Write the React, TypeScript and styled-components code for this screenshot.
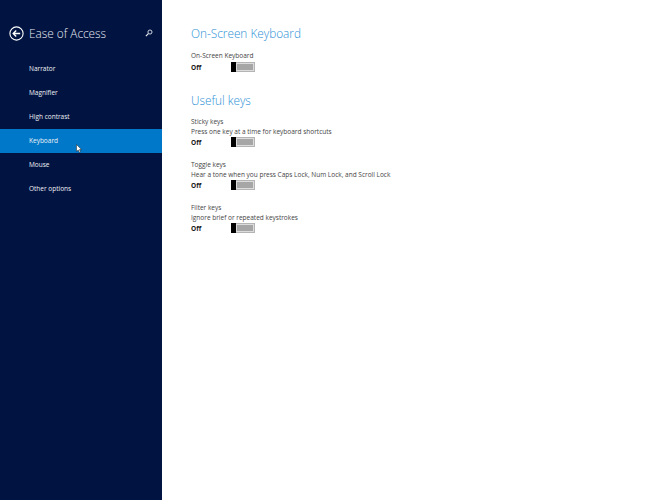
import React from 'react';
import styled, { createGlobalStyle } from 'styled-components';

const GlobalStyle = createGlobalStyle`
  html, body {
    margin: 0;
    padding: 0;
    height: 100%;
    background: #ffffff;
  }
  #root {
    height: 100%;
  }
`;

const Screen = styled.div`
  position: relative;
  display: flex;
  width: 667px;
  height: 500px;
  overflow: hidden;
  font-family: 'Open Sans', 'Noto Sans', sans-serif;
  background: #ffffff;
`;

const Sidebar = styled.nav`
  display: flex;
  flex-direction: column;
  flex: 0 0 162px;
  background: #011340;
  color: #ffffff;
`;

const SidebarHeader = styled.header`
  display: flex;
  align-items: center;
  height: 20px;
  margin-top: 23px;
  padding: 0 7px 0 9px;
  margin-bottom: 14px;
`;

const BackButton = styled.svg`
  flex: 0 0 15px;
  width: 15px;
  height: 15px;
  margin-right: 5px;
`;

const SidebarTitle = styled.h1`
  flex: 1;
  margin: 0;
  font-size: 11.8px;
  font-weight: 300;
  line-height: 20px;
  color: #e8ecf4;
`;

const SearchIcon = styled.svg`
  width: 8px;
  height: 8px;
  margin-right: 2px;
`;

const NavItem = styled.div<{ $active?: boolean }>`
  display: flex;
  align-items: center;
  box-sizing: border-box;
  height: 24px;
  padding: 0 0 1px 29px;
  font-size: 6.5px;
  color: #f0f2f6;
  background: ${props => (props.$active ? '#0078c9' : 'transparent')};
`;

const Content = styled.main`
  flex: 1;
  padding: 24px 0 0 29px;
`;

const SectionTitle = styled.h2`
  margin: 0;
  font-size: 11.8px;
  font-weight: 300;
  line-height: 18px;
  color: #2a8fd6;
`;

const SecondTitle = styled(SectionTitle)`
  margin-top: 18px;
`;

const SettingList = styled.div<{ $top: number }>`
  display: grid;
  row-gap: 10px;
  margin-top: ${props => props.$top}px;
`;

const Setting = styled.section`
  padding-top: 1px;
  font-size: 6.5px;
  line-height: 10px;
  color: #444444;
`;

const Description = styled.div``;

const ToggleRow = styled.div<{ $tight?: boolean }>`
  display: flex;
  align-items: center;
  height: 12px;
  margin: ${props => (props.$tight ? '-1px 0 1px' : '0')};
`;

const ToggleLabel = styled.span`
  flex: 0 0 40px;
  margin-top: 2px;
  font-weight: 700;
  color: #1a1a1a;
`;

const Track = styled.div`
  display: flex;
  box-sizing: border-box;
  width: 24px;
  height: 10px;
  border: 1px solid #b4b4b4;
  background: #dcdcdc;
`;

const Thumb = styled.div`
  flex: 0 0 5px;
  margin: -1px 0 -1px -1px;
  background: #000000;
`;

const TrackFill = styled.div`
  flex: 1;
  margin: 1px;
  background: #a6a6a6;
`;

const Cursor = styled.svg`
  position: absolute;
  left: 76px;
  top: 144px;
  width: 6px;
  height: 9px;
`;

const navItems = ['Narrator', 'Magnifier', 'High contrast', 'Keyboard', 'Mouse', 'Other options'];

const usefulKeys = [
  { name: 'Sticky keys', text: 'Press one key at a time for keyboard shortcuts' },
  { name: 'Toggle keys', text: 'Hear a tone when you press Caps Lock, Num Lock, and Scroll Lock' },
  { name: 'Filter keys', text: 'Ignore brief or repeated keystrokes' },
];

const Toggle = ({ tight }: { tight?: boolean }) => (
  <ToggleRow $tight={tight}>
    <ToggleLabel>Off</ToggleLabel>
    <Track>
      <Thumb />
      <TrackFill />
    </Track>
  </ToggleRow>
);

const App: React.FC = () => (
  <Screen>
    <GlobalStyle />
    <Sidebar>
      <SidebarHeader>
        <BackButton viewBox="0 0 15 15" fill="none" stroke="#ffffff">
          <circle cx="7.5" cy="7.5" r="6.6" strokeWidth="1.1" />
          <path d="M11.2 7.5H4.4M7.2 4.5L4.2 7.5L7.2 10.5" strokeWidth="1.4" />
        </BackButton>
        <SidebarTitle>Ease of Access</SidebarTitle>
        <SearchIcon viewBox="0 0 9 9" fill="none" stroke="#e8ecf4">
          <circle cx="5.6" cy="3.4" r="2.3" strokeWidth="1" />
          <path d="M3.8 5.2L1 8" strokeWidth="1.4" />
        </SearchIcon>
      </SidebarHeader>
      {navItems.map(item => (
        <NavItem key={item} $active={item === 'Keyboard'}>
          {item}
        </NavItem>
      ))}
    </Sidebar>
    <Content>
      <SectionTitle>On-Screen Keyboard</SectionTitle>
      <SettingList $top={8}>
        <Setting>
          <Description>On-Screen Keyboard</Description>
          <Toggle />
        </Setting>
      </SettingList>
      <SecondTitle>Useful keys</SecondTitle>
      <SettingList $top={7}>
        {usefulKeys.map(key => (
          <Setting key={key.name}>
            <Description>{key.name}</Description>
            <Description>{key.text}</Description>
            <Toggle tight />
          </Setting>
        ))}
      </SettingList>
    </Content>
    <Cursor viewBox="0 0 6 9">
      <path d="M0.5 0.5V7.5L2.2 6L3.4 8.5L4.6 8L3.4 5.6H5.5Z" fill="#ffffff" stroke="#222222" strokeWidth="0.5" />
    </Cursor>
  </Screen>
);

export default App;
